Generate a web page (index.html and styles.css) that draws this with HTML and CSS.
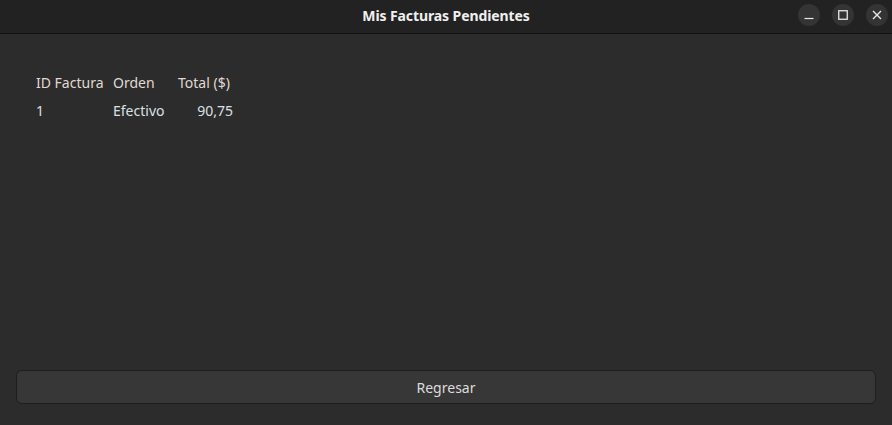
FILE: index.html
```html
<!DOCTYPE html>
<html>
<head>
<meta charset="utf-8">
<link rel="stylesheet" href="styles.css">
</head>
<body>
<div class="window">
  <header class="titlebar">
    <div class="title">Mis Facturas Pendientes</div>
    <div class="controls">
      <span class="ctl"><svg width="10" height="10" viewBox="0 0 10 10"><path d="M0.5 8.5H9.5" stroke="#e8e8e8" stroke-width="1.2"/></svg></span>
      <span class="ctl"><svg width="10" height="10" viewBox="0 0 10 10"><rect x="0.75" y="0.75" width="8.5" height="8.5" fill="none" stroke="#e8e8e8" stroke-width="1.3"/></svg></span>
      <span class="ctl"><svg width="10" height="10" viewBox="0 0 10 10"><path d="M1 1L9 9M9 1L1 9" stroke="#e8e8e8" stroke-width="1.4"/></svg></span>
    </div>
  </header>
  <main class="content">
    <table class="grid">
      <thead>
        <tr><th class="c1">ID Factura</th><th class="c2">Orden</th><th class="c3">Total ($)</th></tr>
      </thead>
      <tbody>
        <tr><td class="c1">1</td><td class="c2">Efectivo</td><td class="c3 num">90,75</td></tr>
      </tbody>
    </table>
    <div class="spacer"></div>
    <button class="btn">Regresar</button>
  </main>
</div>
</body>
</html>
```
FILE: styles.css
```css
* { box-sizing: border-box; }
html, body { margin: 0; padding: 0; }
body {
  width: 892px;
  height: 425px;
  background: #2c2c2c;
  font-family: "Noto Sans", "Open Sans", sans-serif;
  color: #dedede;
  overflow: hidden;
}
.window { display: flex; flex-direction: column; height: 425px; }
.titlebar {
  height: 34px;
  background: #222222;
  border-bottom: 1px solid #121212;
  display: flex;
  align-items: center;
  justify-content: center;
  position: relative;
  flex: none;
}
.title {
  font-weight: 700;
  font-size: 14px;
  color: #f0f0f0;
  letter-spacing: -0.1px;
  margin-top: -3px;
}
.controls {
  position: absolute;
  right: 4px;
  top: 4px;
  display: flex;
  gap: 12px;
}
.ctl {
  width: 22px;
  height: 22px;
  border-radius: 50%;
  background: #343434;
  display: flex;
  align-items: center;
  justify-content: center;
}
.content {
  flex: 1;
  display: flex;
  flex-direction: column;
  padding: 34px 16px 21px 16px;
}
.grid {
  border-collapse: collapse;
  margin-left: 20px;
  font-size: 14px;
  align-self: flex-start;
  table-layout: fixed;
  width: 197px;
}
.grid th, .grid td {
  font-weight: 400;
  text-align: left;
  padding: 0;
  height: 28px;
  white-space: nowrap;
  letter-spacing: 0;
}
.grid th { color: #e0dad2; }
.grid td { color: #dbe0e4; }
.c1 { width: 77px; }
.c2 { width: 65px; }
.c3 { width: 55px; }
.num { text-align: right !important; }
.spacer { flex: 1; }
.btn {
  height: 34px;
  width: 100%;
  background: #373737;
  border: 1px solid #1e1e1e;
  border-radius: 6px;
  color: #dcdcdc;
  font-family: "Noto Sans", "Open Sans", sans-serif;
  font-size: 14px;
  letter-spacing: 0;
  padding: 0;
  flex: none;
}
```
